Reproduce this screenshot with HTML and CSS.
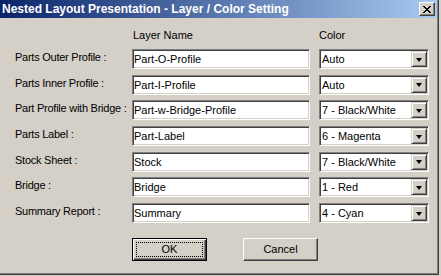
FILE: index.html
```html
<!DOCTYPE html>
<html lang="en">
<head>
  <title>Nested Layout Presentation - Layer / Color Setting</title>
  <link rel="stylesheet" href="styles.css">
</head>
<body>
  <div class="window">
    <div class="titlebar">
      <span class="title">Nested Layout Presentation - Layer / Color Setting</span>
      <button class="close" type="button">
        <svg width="8" height="7" viewBox="0 0 8 7">
          <path d="M0 0h2v1h1v1h2v-1h1v-1h2v1h-1v1h-1v1h-1v1h1v1h1v1h1v1h-2v-1h-1v-1h-2v1h-1v1h-2v-1h1v-1h1v-1h1v-1h-1v-1h-1v-1h-1z" fill="#000"/>
        </svg>
      </button>
    </div>

    <div class="content">
      <div class="colheads">
        <span class="head-name">Layer Name</span>
        <span class="head-color">Color</span>
      </div>

      <div class="layers">
        <label class="lbl">Parts Outer Profile :</label>
        <input class="field" type="text" value="Part-O-Profile">
        <div class="combo"><span class="combo-text">Auto</span><span class="drop"></span></div>

        <label class="lbl">Parts Inner Profile :</label>
        <input class="field" type="text" value="Part-I-Profile">
        <div class="combo"><span class="combo-text">Auto</span><span class="drop"></span></div>

        <label class="lbl">Part Profile with Bridge :</label>
        <input class="field" type="text" value="Part-w-Bridge-Profile">
        <div class="combo"><span class="combo-text">7 - Black/White</span><span class="drop"></span></div>

        <label class="lbl">Parts Label :</label>
        <input class="field" type="text" value="Part-Label">
        <div class="combo"><span class="combo-text">6 - Magenta</span><span class="drop"></span></div>

        <label class="lbl">Stock Sheet :</label>
        <input class="field" type="text" value="Stock">
        <div class="combo"><span class="combo-text">7 - Black/White</span><span class="drop"></span></div>

        <label class="lbl">Bridge :</label>
        <input class="field" type="text" value="Bridge">
        <div class="combo"><span class="combo-text">1 - Red</span><span class="drop"></span></div>

        <label class="lbl">Summary Report :</label>
        <input class="field" type="text" value="Summary">
        <div class="combo"><span class="combo-text">4 - Cyan</span><span class="drop"></span></div>
      </div>

      <div class="actions">
        <button class="btn btn-default" type="button"><span class="focus">OK</span></button>
        <button class="btn" type="button">Cancel</button>
      </div>
    </div>
  </div>
</body>
</html>
```

FILE: styles.css
```css
body {
    margin: 0;
    background-color: #d4d0c8;
    font-family: "Liberation Sans", Arial, sans-serif;
    font-size: 11px;
    color: #000;
}

.window {
    width: 439px;
    height: 275px;
    border-right: 1px solid #404040;
    border-bottom: 1px solid #404040;
    box-shadow: inset -1px -1px #808080;
    box-sizing: border-box;
    padding-right: 1px;
}

.titlebar {
    height: 18px;
    display: flex;
    align-items: center;
    justify-content: space-between;
    background: linear-gradient(to right, #0a246a, #a6caf0);
}
.title {
    padding-left: 2px;
    color: #fff;
    font-weight: bold;
    font-size: 12px;
    line-height: 18px;
    white-space: nowrap;
}
.close {
    width: 16px;
    height: 14px;
    margin-right: 2px;
    padding: 0;
    display: flex;
    align-items: center;
    justify-content: center;
    background: #d4d0c8;
    border: 1px solid;
    border-color: #fff #404040 #404040 #fff;
    box-shadow: inset -1px -1px #808080;
}

.content {
    padding: 11px 0 0 15px;
}

.colheads {
    display: flex;
    line-height: 13px;
    padding-left: 118px;
}
.head-name {
    width: 186px;
}

.layers {
    margin-top: 7px;
    display: grid;
    grid-template-columns: 117px 187px 110px;
    grid-auto-rows: 20px;
    row-gap: 5.7px;
}
.lbl {
    padding-top: 2px;
    line-height: 13px;
    letter-spacing: -0.25px;
    white-space: nowrap;
}
.field {
    width: 178px;
    height: 20px;
    box-sizing: border-box;
    margin: 0;
    padding: 0 1px;
    font: inherit;
    color: #000;
    background: #fff;
    border: 1px solid;
    border-color: #808080 #fff #fff #808080;
    box-shadow: inset 1px 1px #404040, inset -1px -1px #d4d0c8;
    outline: none;
}

.combo {
    height: 20px;
    box-sizing: border-box;
    display: flex;
    align-items: center;
    background: #fff;
    border: 1px solid;
    border-color: #808080 #fff #fff #808080;
    box-shadow: inset 1px 1px #404040, inset -1px -1px #d4d0c8;
    padding: 1px;
}
.combo-text {
    flex: 1;
    padding-left: 1px;
    line-height: 16px;
    white-space: nowrap;
}
.drop {
    width: 16px;
    height: 16px;
    box-sizing: border-box;
    display: flex;
    align-items: center;
    justify-content: center;
    background: #d4d0c8;
    border: 1px solid;
    border-color: #d4d0c8 #404040 #404040 #d4d0c8;
    box-shadow: inset 1px 1px #fff, inset -1px -1px #808080;
}
.drop::after {
    content: "";
    width: 0;
    height: 0;
    margin-top: 1px;
    border-left: 3.5px solid transparent;
    border-right: 3.5px solid transparent;
    border-top: 4px solid #000;
}

.actions {
    display: flex;
    gap: 36px;
    margin-top: 14.8px;
    padding-left: 117px;
}
.btn {
    width: 75px;
    height: 23px;
    padding: 0;
    font: inherit;
    color: #000;
    background: #d4d0c8;
    border: 1px solid;
    border-color: #fff #404040 #404040 #fff;
    box-shadow: inset -1px -1px #808080;
}
.btn-default {
    border-color: #000;
    box-shadow: inset 1px 1px #fff, inset -1px -1px #404040, inset -2px -2px #808080;
    display: flex;
    padding: 3px;
}
.focus {
    flex: 1;
    display: flex;
    align-items: center;
    justify-content: center;
    border: 1px dotted #000;
}
```
